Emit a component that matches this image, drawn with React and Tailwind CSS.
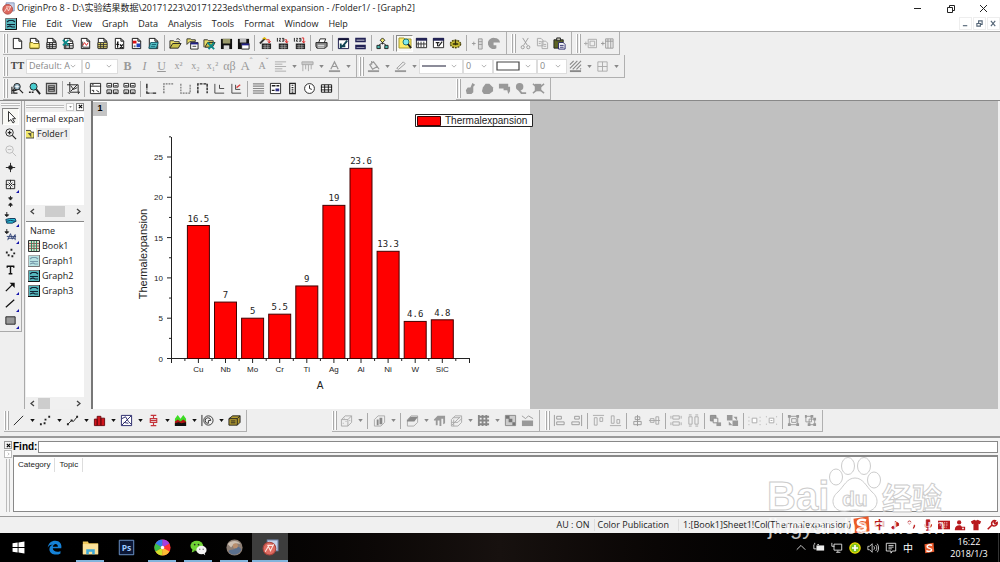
import React, { useState } from 'react';
import clsx from 'clsx';

// 14x14 toolbar drawings, keyed by name
const page = <path d="M2.500 1.500h6l3 3v8h-9zM8.500 1.500v3h3" fill="#fff" stroke="#111" />;
const floppy = <path d="M1 2h12v11H1z" fill="#111" />;

const glyphs = {
  newProject: page,
  newFolder: <>{page}<path d="M2 6h3l1 1h6v5H2z" fill="#ffef7a" stroke="#776a10" /></>,
  newBook: <>{page}<path d="M2 6h10v6H2zM2 8h10M2 10h10M5 6v6M8 6v6" fill="#fff" stroke="#222" /></>,
  newExcel: <>{page}<path d="M4 7h8v5H4zM4 9.500h8M8 7v5" fill="#fff" stroke="#222" /><path d="M1 3l6 6M7 3l-6 6" stroke="#0b8a8a" strokeWidth="2" /></>,
  newGraph: <>{page}<path d="M4 5v6h7" fill="none" stroke="#333" /><path d="M4 9l2-3 2 3 2-3" fill="none" stroke="#d22" /></>,
  newMatrix: <>{page}<path d="M2 6h10v6H2z" fill="#ffee70" stroke="#333" /><path d="M2 8h10M2 10h10M5 6v6M8 6v6" stroke="#333" /></>,
  newFunction: <>{page}<path d="M6 5.500h-1v6M3.500 8h3M7.500 8l3 4M10.500 8l-3 4" fill="none" stroke="#111" strokeWidth="1.300" /></>,
  newLayout: <>{page}<path d="M3 4h4v3H3z" fill="#d11" /><path d="M7 7h4v4H7z" fill="#2244bb" /><path d="M4 9h2v2H4z" fill="#777" /></>,
  newNotes: <>{page}<path d="M4 6h8l-2 6H2z" fill="#5ed0d4" stroke="#156" /><path d="M5 8h5M4 10h5" stroke="#156" /></>,
  open: <><path d="M1 12V4h4l1 1h5v2" fill="#e8dd66" stroke="#333" /><path d="M1 12l3-5h9l-3 5z" fill="#c9c14a" stroke="#222" /><path d="M8 2.500c2-1.500 3 0 4 1" fill="none" stroke="#222" /></>,
  openTemplate: <><path d="M1 8V2h4l1 1h4v2H4z" fill="#e8dd66" stroke="#333" /><path d="M5 6h8v7H5z" fill="#fff" stroke="#222" /><path d="M5 6h8v2H5z" fill="#228" /><path d="M7 10h4" stroke="#333" /></>,
  openExcel: <><path d="M1 11V3h4l1 1h5v2" fill="#e8dd66" stroke="#333" /><path d="M2 11l3-5h8l-3 5z" fill="#c9c14a" stroke="#222" /><path d="M5 6l7 7M12 6l-6 7" stroke="#0b8a8a" strokeWidth="2" /></>,
  save: <>{floppy}<path d="M3 2h8v5H3z" fill="#9a9a6a" /><path d="M4 9h6v4H4z" fill="#ddd" /></>,
  saveTemplate: <>{floppy}<path d="M3 2h7v4H3z" fill="#bbb" /><path d="M5 7h8v6H5z" fill="#fff" stroke="#222" /><path d="M5 7h8v2H5z" fill="#228" /></>,
  wizard: <><path d="M3 7h10v6H3z" fill="#222" /><path d="M4 9.500h8M4 11.500h8M6.500 8v5M9.500 8v5" stroke="#ccc" strokeWidth=".6" /><path d="M1 7l5-5" stroke="#333" strokeWidth="2" /><path d="M4 2l2-1 2 2" fill="none" stroke="#d9b400" strokeWidth="1.500" /><path d="M8 3h3v3M9.500 4.500l1.500 2 1.500-2" fill="none" stroke="#d22" /></>,
  importOne: <><path d="M3 7h10v6H3z" fill="#222" /><path d="M4 9.500h8M4 11.500h8M6.500 8v5M9.500 8v5" stroke="#ccc" strokeWidth=".6" /><path d="M1.500 1v4M3.500 1.500h1.500l-1.500 3h2M6.500 1.500h2v3h-2M7 3h1" fill="none" stroke="#222" /><path d="M9.500 3h2v3M10 4.500l1.500 2 1.500-2" fill="none" stroke="#d22" /></>,
  importMany: <><path d="M3 7h10v6H3z" fill="#222" /><path d="M4 9.500h8M4 11.500h8M6.500 8v5M9.500 8v5" stroke="#ccc" strokeWidth=".6" /><path d="M1.500 1v4M3.500 1.500h1.500l-1.500 3h2M6.500 1.500h2v3h-2M7 3h1" fill="none" stroke="#222" /><path d="M9.500 1h2v5M10 4.500l1.500 2 1.500-2" fill="none" stroke="#d22" /></>,
  print: <><path d="M4 6l1.500-4h6L10 6" fill="#fff" stroke="#222" /><path d="M1 6h12v4l-2 2H2l-1-2z" fill="#888" stroke="#222" /><path d="M3 9h7M3 11h7" stroke="#eee" /></>,
  refresh: <><path d="M1.500 1.500h11v11h-11z" fill="#fff" stroke="#114" /><path d="M1.500 1.500h11v2h-11z" fill="#113" /><path d="M11 4L6 10M4 7v4l3-2M3 10h6" fill="none" stroke="#145" strokeWidth="2" /></>,
  duplicate: <path d="M2 1.500h10v3.500H2zM2 9h10v3.500H2zM2 3h10M2 10.500h10" fill="#fff" stroke="#225" strokeWidth="1.400" />,
  explorer: <><path d="M7 5v3M7 6l-4 3M7 6l4 3M5 12H2M12 12H9" stroke="#222" fill="none" /><path d="M7 1l2.500 2.500L7 6 4.500 3.500z" fill="#efe76a" stroke="#222" /><path d="M1 9h3.500v3.500H1zM9.500 9H13v3.500H9.500z" fill="#49b9b0" stroke="#222" /></>,
  projectView: <><path d="M1 2h5l1 1h6v9H1z" fill="#ffec67" stroke="#a59b30" /><circle cx="8" cy="6" r="3" fill="#7fe9ee" stroke="#277" /><path d="M10 8l3 4" stroke="#222" strokeWidth="2" /></>,
  resultsLog: <><path d="M1.500 1.500h11v10h-11z" fill="#fff" stroke="#222" /><path d="M1 1h12v3H1z" fill="#225" /><path d="M3.500 5v6M6.500 5v6M9.500 5v6M2 7.500h10" stroke="#333" /></>,
  script: <><path d="M1.500 1.500h11v10h-11z" fill="#fff" stroke="#222" /><path d="M1 1h12v3H1z" fill="#225" /><path d="M4 6h4M6 6v4M7 10l4-5" stroke="#222" strokeWidth="1.300" /></>,
  gear: <><ellipse cx="7" cy="7.500" rx="5.500" ry="4" fill="#c9bd36" stroke="#4d470b" strokeWidth="1.500" strokeDasharray="2 1" /><path d="M4 7.500h6M7 3v6" stroke="#332f08" strokeWidth="1.500" /></>,
  addColumn: <path d="M1 7h4M3 5v4M8 2h4v11H8zM8 5h4M8 8h4" fill="#ddd" stroke="#999" />,
  rotateShape: <path d="M7 1a6 6 0 1 0 2 11V9H6V6h7A6 6 0 0 0 7 1z" fill="#999" />,
  cut: <><path d="M4 1l5 8M10 1L5 9" stroke="#999" fill="none" /><circle cx="4" cy="11" r="1.700" fill="none" stroke="#999" /><circle cx="10" cy="11" r="1.700" fill="none" stroke="#999" /></>,
  copy: <path d="M1.500 1.500h4l2 2v6h-6zM6.500 4.500h4l2 2v6h-6zM3 5h3M3 7h2M8 8h3M8 10h3" fill="#eee" stroke="#aaa" />,
  paste: <><path d="M1 3h10v9H1z" fill="#5c6323" stroke="#222" /><path d="M4 1h4v3H4z" fill="#bba" stroke="#222" /><path d="M6 6h5l2 2v5H6z" fill="#fff" stroke="#226" /><path d="M7.500 9h4M7.500 11h4" stroke="#226" /></>,
  layerBox: <path d="M0 7h4M2 5v4M4.500 2.500h9v9h-9zM6.500 4.500h5v5h-5z" fill="none" stroke="#aaa" />,
  layerCols: <path d="M0 7h4M2 5v4M5 2h8v10H5zM7.500 2v10M10.500 2v10M5 4.500h8" fill="none" stroke="#999" />,
  zoomIn: <><circle cx="6.500" cy="5" r="3.500" fill="#8ab" stroke="#222" /><path d="M4.500 5h4M6.500 3v4" stroke="#fff" /><path d="M9 8l4 4M1 5v8M3 7v5h4M1 9h5" stroke="#222" fill="none" strokeWidth="1.300" /></>,
  zoomTeal: <><circle cx="6" cy="5" r="3.800" fill="#48cdd0" stroke="#222" /><path d="M9 8l4 5" stroke="#222" strokeWidth="2" /><path d="M1 11h6" stroke="#222" strokeWidth="1.500" strokeDasharray="2 1" /></>,
  wholePage: <path d="M1.500 1.500h11v11h-11zM4 4h6v6H4zM4 6h6M4 8h6" fill="#bbb" stroke="#444" strokeWidth="1.200" />,
  rescale: <path d="M3 0v11h11M0 3h12v8M4 10l7-7M4 4l3 4 4-2M1 11l2 2M12 13l1-2" fill="none" stroke="#222" />,
  panelOne: <path d="M1.500 1.500h11v11h-11zM1 4.500h12M3 9h2v2M8 9l3 2M3 3h2" fill="#fff" stroke="#222" />,
  panelFour: <path d="M1 1.500h5v4H1zM8 1.500h5v4H8zM1 8.500h5v4H1zM8 8.500h5v4H8zM2 4h3M9 4h3M2 11h3M9 11h3" fill="#fff" stroke="#222" />,
  axisBL: <path d="M2 2v10h10" fill="none" stroke="#222" strokeWidth="1.500" strokeDasharray="5 1 1 1" />,
  axisTop: <path d="M2 12V2h11" fill="none" stroke="#777" strokeWidth="1.500" strokeDasharray="2 1" />,
  axisBR: <path d="M2 2v10h10V2" fill="none" stroke="#777" strokeWidth="1.300" strokeDasharray="2 1" />,
  axisBox: <path d="M2 12V2h10v10" fill="none" stroke="#222" strokeWidth="1.500" strokeDasharray="3 1" />,
  axisInset: <path d="M2 2v10h10M7 3v4h5" fill="none" stroke="#444" />,
  axisInsetRed: <><path d="M2 2v10h10M6 3v5h5" fill="none" stroke="#444" /><path d="M7 6l4-3" stroke="#d44" strokeWidth="1.500" /></>,
  lines: <path d="M1 2h12M1 4.500h12M1 7h12M1 9.500h12M1 12h12" stroke="#888" strokeWidth="1.300" />,
  legendBox: <><path d="M1.500 1.500h11v11h-11z" fill="#fff" stroke="#222" /><path d="M3 4h4M8 4h3M3 9h3" stroke="#222" strokeWidth="1.500" /><path d="M7 7h4v3H7z" fill="#338" /></>,
  colorScale: <path d="M4 1.500h6v11H4zM6 3.500h2M6 6h2M6 8.500h2M6 11h2" fill="#fff" stroke="#222" strokeWidth="1.300" />,
  clock: <><circle cx="7" cy="7" r="5.300" fill="#fff" stroke="#222" /><path d="M7 3.500V7l2.500 1" stroke="#222" fill="none" /></>,
  table: <path d="M1.500 3h11v8h-11zM1 5.500h12M1 8.500h12M5 3v8M9 3v8" fill="#fff" stroke="#111" />,
  maskA: <path d="M9 1l3 2-2 2v6l-2 2H3l-1-4 2-3h3z" fill="#999" />,
  maskB: <path d="M2 6l3-4h4l4 4v4l-4 3H3l-2-3z" fill="#999" />,
  maskC: <path d="M1 2h10v3h2v5l-2 3-1-4H6V7H1z" fill="#999" />,
  maskD: <><circle cx="5" cy="5" r="4" fill="#999" /><path d="M4 8l3 4h5" stroke="#999" strokeWidth="2" fill="none" /></>,
  maskE: <><path d="M3 2h7v8H3z" fill="#999" /><path d="M1 2l12 10M13 2L1 12" stroke="#999" strokeWidth="1.500" /></>,
  alignText: <path d="M1 2h12M1 4.500h8M1 7h12M1 9.500h8M1 12h12" stroke="#aaa" />,
  column: <path d="M1 2h12v3H1zM2 5v7M5 5v5M8 5v7M11 5v5" fill="#ccc" stroke="#aaa" />,
  bucket: <><path d="M3 5l4-3 4 5-5 3zM5 5V1M11 7l2 3" fill="none" stroke="#999" strokeWidth="1.300" /><path d="M1 11h12v2H1z" fill="#999" /></>,
  pen: <><path d="M3 9l7-7 2 2-7 6z" fill="none" stroke="#999" /><path d="M1 11h12v2H1z" fill="#999" /></>,
  fontColor: <><path d="M3 10l4-8 4 8M4.500 7h5" fill="none" stroke="#999" strokeWidth="1.300" /><path d="M1 11h12v2H1z" fill="#999" /></>,
  hatch: <><path d="M1 5l4-4M1 9l8-8M4 10l9-9M8 10l5-5M12 10l1-1" stroke="#888" strokeWidth="1.200" /><path d="M1 11h12v2H1z" fill="#888" /></>,
  grid: <path d="M2 2h10v10H2zM7 2v10M2 7h10" fill="none" stroke="#aaa" />,
  pointer: <path d="M4.500 1.500v10l2.500-2 2 3.500 1.500-1-2-3.300h3z" fill="#fff" stroke="#333" />,
  magnify: <><circle cx="6" cy="6" r="4" fill="none" stroke="#222" /><path d="M4 6h4M6 4v4M9 9l4 4" stroke="#222" strokeWidth="1.300" /></>,
  magnifyOff: <><circle cx="6" cy="6" r="4" fill="none" stroke="#bbb" /><path d="M4 6h4M9 9l4 4" stroke="#bbb" /></>,
  screenReader: <><path d="M7 2v10M2 7h10" stroke="#222" /><circle cx="7" cy="7" r="2.500" fill="#222" /></>,
  dataReader: <><path d="M2.500 2.500h9v9h-9zM7 2v3M7 9v3M2 7h3M9 7h3" fill="none" stroke="#222" /><path d="M5 5l4 4M9 5L5 9" stroke="#222" /></>,
  dataSelect: <path d="M7 1v4M7 9v4M5 3l2 2.500L9 3zM5 11l2-2.500L9 11z" fill="#222" stroke="#222" />,
  maskPts: <><path d="M2 8l4-1h6l1 3-4 2H3z" fill="#27bcd6" stroke="#135" /><path d="M3 10l4-1 5 1" fill="none" stroke="#135" /><path d="M3 0v4M1 3l2 2 2-2z" fill="#222" stroke="#222" /></>,
  draw: <><path d="M4 12l3-7 2 6 3-5v6M3 8h10M4 10h8" fill="none" stroke="#347" /><path d="M3 0v4M1 3l2 2 2-2z" fill="#222" stroke="#222" /></>,
  scatterTool: <path d="M2 6h2v2H2zM7 3h2v2H7zM10 7h2v2h-2zM4 9h2v2H4zM8 10h2v2H8z" fill="#222" />,
  textTool: <path d="M3 3.500h8M7 3v8M5 11.500h4M3.500 3v2M10.500 3v2" stroke="#111" strokeWidth="1.500" fill="none" />,
  arrowTool: <><path d="M2 12l7-7" stroke="#111" strokeWidth="1.400" /><path d="M6 3h5.500v5.500z" fill="#111" /></>,
  lineTool: <path d="M2 11l9-8" stroke="#111" strokeWidth="1.300" />,
  rectTool: <path d="M2 3h10v8H2z" fill="#999" stroke="#222" />,
  plotLine: <path d="M2 12L12 2" stroke="#222" />,
  plotScatter: <path d="M1 10h2v2H1zM5 9h2v2H5zM6 5h2v2H6zM10 2h2v2h-2z" fill="#222" />,
  plotLineSym: <><path d="M2 11l4-4 2 1 4-5" fill="none" stroke="#222" /><path d="M1 10h2v2H1zM5 6h2v2H5zM11 2h2v2h-2z" fill="#222" /></>,
  plotBar: <path d="M1.500 5.500h3v7h-3zM4.500 2.500h4v10h-4zM8.500 4.500h4v8h-4z" fill="#d1141c" stroke="#6b0a0e" />,
  plotBox: <><path d="M1.500 1.500h11v11h-11z" fill="#fff" stroke="#226" /><path d="M2 12l10-10M2 5l4-2 3 5 3 3M4 9l5 1" fill="none" stroke="#226" /></>,
  plotStock: <path d="M4 1.500h6M7 2v3M3.500 5h7v4h-7zM3.500 7h7M7 9v3M4 12.500h6" fill="none" stroke="#c4333a" strokeWidth="1.200" />,
  plotArea: <><path d="M1 13V5l3-4 3 4 3-4 3 4v8z" fill="#3cdc24" /><path d="M1 13V8l3-2 3 2 3-2 3 2v5z" fill="#b41212" /><path d="M1 13v-3l4-1 3 1 5-1v4z" fill="#111" /></>,
  plotPolar: <><path d="M1 1v12" stroke="#222" /><circle cx="8" cy="7" r="5" fill="none" stroke="#333" /><path d="M8 10a3 3 0 1 1 2.500-3H8v3" fill="none" stroke="#333" /></>,
  plotTemplate: <><path d="M1 5l4-3h8v7l-3 3H1z" fill="#b49b2f" stroke="#222" /><path d="M1 5h9v7M10 5l3-3M3 7.500h5M3 9.500h5" fill="none" stroke="#222" /></>,
  cube: <path d="M1.500 6v7h7l4-4V2h-7l-4 4h7l4-4M8.500 6v7M4 4.500h1M6 8h1M3 10h1M10 7h1" fill="#eee" stroke="#aaa" />,
  cubeBars: <><path d="M1.500 6v7h7l4-4V2h-7z" fill="#eee" stroke="#aaa" /><path d="M4 6h2v6H4zM7 4h3v7H7z" fill="#888" /></>,
  surface: <><path d="M1.500 6v7h7l4-4V2h-7z" fill="#eee" stroke="#aaa" /><path d="M1 7l4-4h8l-4 5H1z" fill="#888" /></>,
  walls: <path d="M1 6l4-4h8v8l-2 1V5H9v8H7V7H5v5H3V7H1z" fill="#999" />,
  cubeMesh: <path d="M1.500 6v7h7l4-4V2h-7zM1.500 9h7l4-4M4 6v7M3 4h8M2 12l9-9" fill="none" stroke="#aaa" />,
  contour: <path d="M2 1v12M6 1v12M10 1v12M1 3h12M1 7h12M1 11h12" stroke="#888" strokeWidth="2" fill="none" />,
  image: <><path d="M1.500 1.500h11v11h-11z" fill="#ccc" stroke="#888" /><path d="M2 2h4v3H2zM5 5h4v4H5zM9 9h3v3H9z" fill="#777" /></>,
  profile: <><path d="M1 2l4 3 3-3 5 3" fill="none" stroke="#999" /><path d="M1 7h12v6H1z" fill="#999" /></>,
  alLeft: <path d="M1.500 1v12M4 2.500h5v3H4zM4 8.500h8v3H4z" fill="none" stroke="#999" />,
  alRight: <path d="M12.500 1v12M5 2.500h5v3H5zM2 8.500h8v3H2z" fill="none" stroke="#999" />,
  alTop: <path d="M1 1.500h12M2.500 4h3v8h-3zM8.500 4h3v4h-3z" fill="none" stroke="#aaa" />,
  alBottom: <path d="M1 12.500h12M2.500 2h3v8h-3zM8.500 6h3v4h-3z" fill="none" stroke="#aaa" />,
  alMidV: <path d="M7 1v12M4.500 3h5v3h-5zM3 8h8v3.500H3z" fill="#eee" stroke="#999" />,
  alMidH: <path d="M1 7h12M2.500 5h4v4h-4zM8.500 3h3v8h-3z" fill="#eee" stroke="#aaa" />,
  sameW: <path d="M3 2h7v3.500H3zM3 8.500h7V12H3zM1 2v3M12 2v3M1 9v3M12 9v3" fill="none" stroke="#aaa" />,
  sameH: <path d="M2 3h3.500v8H2zM8.500 3H12v8H8.500zM2 1h3M9 1h3M2 13h3M9 13h3" fill="none" stroke="#aaa" />,
  front: <><path d="M1.500 1.500h6v6h-6z" fill="#999" stroke="#888" /><path d="M4.500 4.500h5v5h-5z" fill="#eee" stroke="#888" /><path d="M8 9h5v4H8z" fill="#999" /></>,
  back: <path d="M1 1h6v6H1zM7 7h6v6H7zM8 3h4v4M3 8v4h4" fill="#999" />,
  groupA: <path d="M4.500 4.500h5v5h-5zM1 3v1M1 7v1M1 11v1M13 3v1M13 7v1M13 11v1" fill="#fff" stroke="#aaa" />,
  groupB: <path d="M4.500 4.500h5v5h-5zM6 7h2M1 3h1M1 11h1M12 3h1M12 11h1" fill="#fff" stroke="#aaa" />,
  group: <><path d="M2.500 2.500h9v9h-9zM5 5h5v4H5z" fill="none" stroke="#999" /><path d="M1 1h3v3H1zM10 1h3v3h-3zM1 10h3v3H1zM10 10h3v3h-3z" fill="#999" /></>,
  ungroup: <><path d="M2 2.500h6v6H2zM5.500 5.500h6v6h-6z" fill="none" stroke="#999" /><path d="M1 1h2v3H1zM7 1h3v3H7zM10 4h3v3h-3zM4 10h3v3H4zM10 10h3v3h-3z" fill="#999" /></>,
};

const Glyph = ({ name, className = 'size-3' }) => (
  <svg viewBox="0 0 14 14" className={clsx('shrink-0', className)} fill="none" aria-hidden="true">
    {glyphs[name]}
  </svg>
);

const ToolButton = ({ name, label, active, children }) => (
  <button
    type="button"
    aria-label={label || name}
    className={clsx(
      'flex h-[17px] w-[17px] shrink-0 items-center justify-center text-[#999]',
      active && 'border border-t-[#888] border-l-[#888] border-r-white border-b-white bg-[#f8f8f4]'
    )}
  >
    {children || <Glyph name={name} className={active ? 'size-[14px]' : 'size-[13px]'} />}
  </button>
);

const Sep = ({ wide }) => (
  <span className={clsx('h-4 w-px shrink-0 border-l border-[#aaa]', wide ? 'mr-[3px] ml-[2px]' : 'mx-[2px]')} />
);

const Grip = () => (
  <span className="mr-px flex h-[19px] shrink-0 gap-px">
    <span className="w-[2px] border-r border-[#aaa] bg-white" />
    <span className="w-[2px] border-r border-[#aaa] bg-white" />
  </span>
);

const DropArrow = ({ dark }) => (
  <button type="button" aria-label="More" className="flex h-[17px] w-[10px] shrink-0 items-center justify-center">
    <svg viewBox="0 0 6 4" className="h-[3px] w-[5px]"><path d="M0 0h6L3 4z" fill={dark ? '#111' : '#888'} /></svg>
  </button>
);

// "-" is a separator, ">" a drop arrow, a leading "*" marks a pressed button
const Tools = ({ items, dark, wide }) =>
  items.map((item, i) => {
    if (item === '-') return <Sep key={i} wide={wide} />;
    if (item === '>') return <DropArrow key={i} dark={dark} />;
    if (item[0] === '*') return <ToolButton key={i} name={item.slice(1)} active />;
    return <ToolButton key={i} name={item} />;
  });

const Toolbar = ({ children, className }) => (
  <div className={clsx('flex h-full shrink-0 items-center border-r border-b border-[#b0b0b0] pr-[3px]', className)}>
    <Grip />
    {children}
  </div>
);

const Chevron = () => (
  <svg viewBox="0 0 8 5" className="pointer-events-none absolute right-[5px] h-1 w-[6px]">
    <path d="M1 1l3 3 3-3" fill="none" stroke="#999" />
  </svg>
);

const Combo = ({ label, value, className, children }) => (
  <label className={clsx('relative flex h-[15px] shrink-0 items-center border border-[#ddd] bg-white', className)}>
    <select aria-label={label} className="h-full w-full appearance-none overflow-hidden bg-transparent pl-[2px] text-[9px] leading-3 text-[#888]">
      <option>{value}</option>
    </select>
    {children}
    <Chevron />
  </label>
);

const menus = ['File', 'Edit', 'View', 'Graph', 'Data', 'Analysis', 'Tools', 'Format', 'Window', 'Help'];

const OriginLogo = ({ className }) => (
  <svg viewBox="0 0 16 16" className={className} aria-hidden="true">
    <path d="M5 1h10v10H5z" fill="#c6d3ea" stroke="#7d8fb5" />
    <circle cx="7" cy="9" r="6" fill="#dd6a60" stroke="#a8433c" />
    <path d="M3 12l3-5 2 4 3-6M5 6h6" fill="none" stroke="#ffe5df" />
  </svg>
);

const GraphIcon = ({ pale }) => (
  <svg viewBox="0 0 12 12" className="size-3 shrink-0" aria-hidden="true">
    <path d="M.5.5h11v11H.5z" fill={pale ? '#b7e2e2' : '#56b6bc'} stroke={pale ? '#aaa' : '#777'} />
    <path d="M11.500 0v11.500H0" fill="none" stroke={pale ? '#777' : '#111'} />
    <path d="M2 4l2-1.500h4L10 4M2 6.500h8M2 9l3-1 2 1h3" fill="none" stroke={pale ? '#79a' : '#123'} strokeWidth="1.200" />
  </svg>
);

const BookIcon = () => (
  <svg viewBox="0 0 12 12" className="size-3 shrink-0" aria-hidden="true">
    <path d="M.5.5h11v11H.5z" fill="#d5e2cd" stroke="#333" />
    <path d="M1 3.500h10M1 6h10M1 8.500h10" stroke="#a55" />
    <path d="M3.500 1v10M6 1v10M8.500 1v10" stroke="#386" />
  </svg>
);

const TopBars = () => (
  <header className="bg-white text-[9px] text-[#222]">
    <div className="flex h-4 items-center">
      <OriginLogo className="mx-[2px] size-[13px]" />
      <h1 className="text-[9px] leading-3">
        OriginPro 8 - D:\实验结果数据\20171223\20171223eds\thermal expansion - /Folder1/ - [Graph2]
      </h1>
      <div className="ml-auto flex">
        {['M1 4.500h7', 'M1.500 3.500h5v5h-5zM3.500 3V1.500h5v5H7', 'M1 1l7 7M8 1L1 8'].map((d, i) => (
          <button key={d} type="button" aria-label={['Minimize', 'Restore', 'Close'][i]} className="flex h-4 w-[33px] items-center justify-center">
            <svg viewBox="0 0 9 9" className="size-[9px]"><path d={d} fill="none" stroke="#222" /></svg>
          </button>
        ))}
      </div>
    </div>
    <nav className="flex h-[15px] items-center">
      <span className="mr-[5px] ml-[5px]"><GraphIcon /></span>
      <div className="flex gap-[10px]">
        {menus.map((m) => (
          <button key={m} type="button" className="leading-3">{m}</button>
        ))}
      </div>
      <div className="ml-auto flex gap-px">
        {['M1 6.500h5', 'M1 4h4v3H1zM3 3.500V1h4v4H5', 'M1 1l5 6M6 1L1 7'].map((d, i) => (
          <button key={d} type="button" aria-label={['Minimize graph', 'Restore graph', 'Close graph'][i]} className="flex h-[13px] w-[13px] items-center justify-center border border-[#eee]">
            <svg viewBox="0 0 8 8" className="size-[7px]"><path d={d} fill="none" stroke="#567" strokeWidth="1.300" /></svg>
          </button>
        ))}
      </div>
    </nav>
  </header>
);

const FormatToolbar = () => (
  <Toolbar>
    <ToolButton label="Font"><span className="font-[Liberation_Serif,serif] text-[10px] leading-3 font-bold text-[#444]">TT</span></ToolButton>
    <Combo label="Font name" value="Default: A" className="w-[56px]" />
    <Combo label="Font size" value="0" className="mr-px w-[36px]" />
    <div className="flex font-[Liberation_Serif,serif] text-[12px] leading-3">
      <ToolButton label="Bold"><b>B</b></ToolButton>
      <ToolButton label="Italic"><i>I</i></ToolButton>
      <ToolButton label="Underline"><u>U</u></ToolButton>
      <ToolButton label="Superscript"><span className="text-[10px]">x²</span></ToolButton>
      <ToolButton label="Subscript"><span className="text-[10px]">x₂</span></ToolButton>
      <ToolButton label="Super and subscript"><span className="text-[10px]">x₁²</span></ToolButton>
      <ToolButton label="Greek">αβ</ToolButton>
      <ToolButton label="Increase font"><span className="text-[13px]">A</span><span className="self-start text-[8px] leading-[8px]">ˆ</span></ToolButton>
      <ToolButton label="Decrease font"><span className="text-[10px]">A</span><span className="self-start text-[8px] leading-[8px]">ˇ</span></ToolButton>
    </div>
    <Tools items={['alignText', '>', 'column', '>', 'fontColor', '>']} />
  </Toolbar>
);

const TopToolbars = () => (
  <div className="shrink-0 border-t border-[#aaa] bg-[#efefef]">
    <div className="flex h-[23px] pl-[3px]">
      <Toolbar>
        <Tools items={['newProject', 'newFolder', 'newBook', 'newExcel', 'newGraph', 'newMatrix', 'newFunction', 'newLayout', 'newNotes', '-',
          'open', 'openTemplate', 'openExcel', 'save', 'saveTemplate', '-', 'wizard', 'importOne', 'importMany', '-', 'print', '-',
          'refresh', 'duplicate', '-', 'explorer', '-', '*projectView', 'resultsLog', 'script', 'gear', '-', 'addColumn', 'rotateShape']} />
      </Toolbar>
      <Toolbar className="pl-[4px]"><Tools items={['cut', 'copy', 'paste']} /></Toolbar>
      <Toolbar className="pl-[4px]"><Tools items={['layerBox', 'layerCols']} /></Toolbar>
    </div>
    <div className="flex h-[23px] pl-[3px]">
      <FormatToolbar />
      <Toolbar className="pl-[2px]">
        <Tools items={['bucket', '>', 'pen', '>']} />
        <Combo label="Line style" value="" className="w-[44px]">
          <svg viewBox="0 0 24 8" className="pointer-events-none absolute left-[2px] h-2 w-6"><path d="M0 4h24" stroke="#667" strokeWidth="1.500" /></svg>
        </Combo>
        <Combo label="Line width" value="0" className="w-[30px]" />
        <Combo label="Border style" value="" className="w-[44px]">
          <svg viewBox="0 0 24 10" className="pointer-events-none absolute left-[2px] h-[10px] w-6"><path d="M1 1h22v8H1z" fill="none" stroke="#444" strokeWidth="1.200" /></svg>
        </Combo>
        <Combo label="Border width" value="0" className="w-[30px]" />
        <Tools items={['hatch', '>', 'grid', '>']} />
      </Toolbar>
    </div>
    <div className="flex h-[22px] pl-[3px]">
      <Toolbar>
        <Tools items={['zoomIn', 'zoomTeal', 'wholePage', '-', 'rescale', '-', 'panelOne', 'panelFour', 'panelFour', '-',
          'axisBL', 'axisTop', 'axisBR', 'axisBox', 'axisInset', 'axisInsetRed', '-', 'lines', 'legendBox', 'colorScale', 'clock', 'table']} />
      </Toolbar>
      <Toolbar className="ml-[117px]"><Tools items={['maskA', 'maskB', 'maskC', 'maskD', 'maskE']} /></Toolbar>
    </div>
  </div>
);

const sideTools = ['*pointer', 'magnify', 'magnifyOff', 'screenReader', 'dataReader', 'dataSelect', 'maskPts', 'draw', 'scatterTool', 'textTool', 'arrowTool', 'lineTool', 'rectTool'];
const withFlyout = ['dataReader', 'maskPts', 'draw', 'arrowTool', 'lineTool', 'rectTool'];

const SideTools = () => (
  <div className="w-[22px] shrink-0 self-start border-r border-b border-[#aaa] pb-[2px]">
    <div className="mx-px mt-[2px] h-[3px] border-y border-[#bbb] bg-white" />
    <div className="mt-[2px] flex flex-col items-center">
      {sideTools.map((t) => (
        <div key={t} className="relative">
          {t[0] === '*' ? <ToolButton name={t.slice(1)} active /> : <ToolButton name={t} />}
          {withFlyout.includes(t) && (
            <svg viewBox="0 0 3 3" className="absolute right-0 bottom-0 size-[3px]"><path d="M3 0v3H0z" fill="#11a" /></svg>
          )}
        </div>
      ))}
    </div>
  </div>
);

const HScroll = ({ children }) => (
  <div className="flex h-3 shrink-0 items-center bg-[#f0f0f0] text-[#444]">
    <button type="button" aria-label="Scroll left" className="flex w-3 justify-center">
      <svg viewBox="0 0 5 7" className="h-[7px] w-[5px]"><path d="M4 1L1 3.500 4 6" fill="none" stroke="currentColor" strokeWidth="1.300" /></svg>
    </button>
    <div className="flex h-[11px] flex-1">{children}</div>
    <button type="button" aria-label="Scroll right" className="flex w-3 justify-center">
      <svg viewBox="0 0 5 7" className="h-[7px] w-[5px]"><path d="M1 1l3 2.500L1 6" fill="none" stroke="currentColor" strokeWidth="1.300" /></svg>
    </button>
  </div>
);

const ProjectExplorer = () => (
  <aside className="ml-[2px] flex w-[69px] shrink-0 flex-col border-r-2 border-l border-l-[#aaa] border-r-[#777] pr-[7px] pl-px text-[9px] text-[#222]">
    <div className="flex h-[11px] shrink-0 items-center gap-[2px]">
      <span className="h-[3px] flex-1 border-y border-[#bbb] bg-white" />
      <button type="button" aria-label="Menu" className="flex size-2 items-center justify-center border border-[#ccc] bg-white">
        <svg viewBox="0 0 4 3" className="h-[2px] w-[3px]"><path d="M0 0h4L2 3z" fill="#888" /></svg>
      </button>
      <button type="button" aria-label="Close panel" className="flex size-2 items-center justify-center border border-[#888] bg-white">
        <svg viewBox="0 0 6 6" className="size-[5px]"><path d="M1 1l4 4M5 1L1 5" stroke="#000" strokeWidth="1.400" /></svg>
      </button>
    </div>
    <div className="flex h-[93px] shrink-0 flex-col overflow-hidden bg-white whitespace-nowrap">
      <div className="h-[14px] leading-[14px]">hermal expan</div>
      <div className="flex h-[15px] items-center">
        <svg viewBox="0 0 9 10" className="h-[10px] w-2 shrink-0"><path d="M0 1h5l1 2h3v6.500H0" fill="#f2e76b" stroke="#333" /><path d="M2 4l4 5V4z" fill="#554" /></svg>
        <span className="ml-[2px] bg-[#eee] px-px leading-3">Folder1</span>
      </div>
    </div>
    <HScroll><span className="ml-[7px] w-5 bg-[#cdcdcd]" /></HScroll>
    <div className="mt-1 flex min-h-0 flex-1 flex-col border-t border-[#888] bg-white">
      <div className="mt-[2px] pl-1 leading-[14px]">Name</div>
      <ul className="mt-[2px] flex-1 pl-[2px]">
        {['Book1', 'Graph1', 'Graph2', 'Graph3'].map((n) => (
          <li key={n} className="mb-[3px] flex h-3 items-center gap-[2px] leading-3">
            {n === 'Book1' ? <BookIcon /> : <GraphIcon pale={n === 'Graph1'} />}
            {n}
          </li>
        ))}
      </ul>
    </div>
    <HScroll><span className="w-3 bg-[#cdcdcd]" /></HScroll>
  </aside>
);

const data = [
  ['Cu', 16.5], ['Nb', 7], ['Mo', 5], ['Cr', 5.5], ['Ti', 9],
  ['Ag', 19], ['Al', 23.6], ['Ni', 13.3], ['W', 4.6], ['SiC', 4.8],
];
const BASE = 257.5;
const yOf = (v) => BASE - v * 8.06;
const xOf = (i) => 105.4 + i * 27.1;

const BarChart = () => (
  <svg viewBox="0 0 437 306" className="h-[306px] w-[437px] overflow-visible font-[Liberation_Sans,Arial,sans-serif]" role="img" aria-label="Thermalexpansion">
    <g stroke="#222">
      <path d="M78.500 36v226M74 257.500h303M376.500 257v5" />
      {[5, 10, 15, 20, 25].map((v) => <path key={v} d={`M74 ${yOf(v)}h4`} />)}
      {[2.5, 7.5, 12.5, 17.5, 22.5, 27.5].map((v) => <path key={v} d={`M76 ${yOf(v)}h2`} />)}
      {data.map(([name], i) => <path key={name} d={`M${xOf(i)} 258v4M${xOf(i) - 13.5} 258v2`} />)}
      <path d={`M${xOf(9) + 13.5} 258v2`} />
      {data.map(([name, v], i) => (
        <rect key={name} x={xOf(i) - 11} y={yOf(v)} width="22" height={v * 8.06} fill="#f00" stroke="#400" />
      ))}
    </g>
    <g textAnchor="middle" fill="#222">
      {data.map(([name, v], i) => (
        <React.Fragment key={name}>
          <text x={xOf(i)} y={yOf(v) - 4} fontSize="9" fontFamily="DejaVu Sans Mono, monospace">{v}</text>
          <text x={xOf(i)} y="271" fontSize="8">{name}</text>
        </React.Fragment>
      ))}
      <text x="227" y="288" fontSize="10">A</text>
      <text transform="translate(54 153) rotate(-90)" fontSize="11">Thermalexpansion</text>
    </g>
    <g textAnchor="end" fontSize="8" fill="#222">
      {[0, 5, 10, 15, 20, 25].map((v) => <text key={v} x="70" y={yOf(v) + 3}>{v}</text>)}
    </g>
    <path d="M322.500 13.500h117v12h-117z" fill="#fff" stroke="#222" />
    <path d="M324.500 15.500h23v9h-23z" fill="#f00" stroke="#400" />
    <text x="352" y="23" fontSize="10" fill="#222">Thermalexpansion</text>
  </svg>
);

const BottomToolbars = () => (
  <div className="flex h-[27px] shrink-0 bg-[#efefef] pt-px pb-1 pl-1">
    <Toolbar>
      <Tools dark items={['plotLine', '>', 'plotScatter', '>', 'plotLineSym', '>', 'plotBar', '>', 'plotBox', '>', 'plotStock', '>', 'plotArea', '>', 'plotPolar', '>', 'plotTemplate']} />
    </Toolbar>
    <Toolbar className="ml-[85px]">
      <Tools wide items={['cube', '>', '-', 'cubeBars', '>', '-', 'surface', '>', 'walls', 'cubeMesh', '>', 'contour', '>', 'image', 'profile']} />
    </Toolbar>
    <Toolbar className="pl-[5px]">
      <Tools items={['alLeft', 'alRight', '-', 'alTop', 'alBottom', '-', 'alMidV', 'alMidH', '-', 'sameW', 'sameH', '-', 'front', 'back', '-', 'groupA', 'groupB', '-', 'group', 'ungroup']} />
    </Toolbar>
  </div>
);

const FindPanel = () => {
  const [query, setQuery] = useState('');
  return (
    <section className="flex h-[80px] shrink-0 border-t-2 border-[#999] bg-[#f4f4f4] pt-[3px] pr-[2px] pb-1 pl-1">
      <div className="mr-px flex w-2 flex-col items-center">
        <button type="button" aria-label="Close find" className="flex size-2 items-center justify-center border border-[#999]">
          <svg viewBox="0 0 6 6" className="size-[5px]"><path d="M1 1l4 4M5 1L1 5" stroke="#000" strokeWidth="1.400" /></svg>
        </button>
        <button type="button" aria-label="Expand" className="mt-px flex size-2 items-center justify-center border border-[#bbb] bg-white">
          <svg viewBox="0 0 4 6" className="h-1 w-[3px]"><path d="M1 1l2 2-2 2" fill="none" stroke="#999" /></svg>
        </button>
        <span className="mt-px w-1 flex-1 border-x border-[#bbb]" />
      </div>
      <div className="flex flex-1 flex-col font-[Liberation_Sans,Arial,sans-serif]">
        <div className="flex h-3 items-center">
          <label htmlFor="find" className="text-[10px] leading-3 font-bold text-black">Find:</label>
          <input id="find" value={query} onChange={(e) => setQuery(e.target.value)} className="ml-px h-3 flex-1 border border-[#888] bg-white px-1 text-[9px]" />
        </div>
        <div className="mt-[2px] flex-1 border border-t-2 border-[#888] bg-white">
          <table className="mt-px text-[8px] text-[#222]">
            <thead>
              <tr>
                <th className="border-r border-[#ddd] px-1 text-left leading-[14px] font-normal">Category</th>
                <th className="border-r border-[#ddd] px-1 text-left leading-[14px] font-normal">Topic</th>
              </tr>
            </thead>
          </table>
        </div>
      </div>
    </section>
  );
};

const SogouLogo = ({ className }) => (
  <svg viewBox="0 0 16 16" className={className} aria-hidden="true">
    <path d="M2 3l12-2 1 12-12 2z" fill="#ea5a2b" />
    <path d="M12 4.500C9 3 5 4 5.500 6.500S12 8 11.500 10.500 7 13 4.500 11.500" fill="none" stroke="#fff" strokeWidth="2" />
  </svg>
);

const imeIcons = [
  ['Tone', <path d="M6 10V3l4 2v3M6 10a2 1.500 0 1 1-2-1.500z" stroke="#b8191d" fill="#b8191d" />],
  ['Punctuation', <><circle cx="4" cy="4" r="1.700" fill="none" stroke="#b8191d" /><path d="M9 7l1 1-1.500 3" stroke="#b8191d" strokeWidth="1.500" fill="none" /></>],
  ['Voice', <><path d="M5 1h4v7H5z" fill="#b8191d" stroke="#b8191d" /><path d="M3 6c0 5 8 5 8 0M7 10v3M4.500 13h5" fill="none" stroke="#b8191d" strokeWidth="1.500" /></>],
  ['Keyboard', <><path d="M0 2h14v10H0z" fill="#b8191d" /><path d="M2 4.500h10M2 7h10M4 9.500h6" stroke="#fff" strokeDasharray="1.500 1" /></>],
  ['User', <><circle cx="6" cy="4" r="2.500" fill="#b8191d" /><path d="M1 12c0-5 7-6 8-3h4v4H1z" fill="#b8191d" /><circle cx="10.500" cy="11" r="1" fill="#fff" /></>],
  ['Skin', <path d="M1 3l4-2c1 1 3 1 4 0l4 2-1.500 3L10 5.500V13H4V5.500L2.500 6z" fill="#b8191d" />],
  ['Settings', <path d="M2 12l5-5M7 7a3.500 3.500 0 0 1 4-5L9.500 4l1 1.500L13 4a3.500 3.500 0 0 1-6 3z" stroke="#b8191d" strokeWidth="1.800" fill="none" />],
];

const StatusBar = () => (
  <div className="flex h-[17px] shrink-0 items-center border-t border-[#999] bg-[#f0f0f0] text-[9px] leading-3 text-[#222]">
    <span className="ml-auto pr-1">AU : ON</span>
    <span className="border-l border-[#ddd] pr-[9px] pl-[3px]">Color Publication</span>
    <span className="border-l border-[#ddd] pl-1">1:[Book1]Sheet1!Col(Thermalexpansion)</span>
    <div className="flex h-full items-center bg-white">
      <SogouLogo className="size-5" />
      <button type="button" className="flex w-[17px] justify-center text-[11px] font-bold text-[#b8191d]">中</button>
      {imeIcons.map(([label, art]) => (
        <button key={label} type="button" aria-label={label} className="flex w-4 justify-center">
          <svg viewBox="0 0 14 14" className="size-3">{art}</svg>
        </button>
      ))}
    </div>
  </div>
);

const Watermark = () => (
  <svg viewBox="0 0 190 84" className="pointer-events-none absolute right-11 bottom-[21px] h-[84px] w-[190px] font-[Liberation_Sans,Noto_Sans_CJK_SC,sans-serif]" aria-hidden="true">
    <g fill="#fff" fillOpacity=".85" stroke="#ccc">
      <text x="1" y="53" fontSize="40" fontWeight="bold">Bai</text>
      <ellipse cx="70" cy="20" rx="6.500" ry="8" />
      <ellipse cx="82" cy="9" rx="6.500" ry="8.500" />
      <ellipse cx="98" cy="9" rx="6.500" ry="8.500" />
      <ellipse cx="108" cy="23" rx="6.500" ry="8" />
      <path d="M89 21c8 0 11 8 17 14 8 6 6 17-3 19-6 1-9-1-14-1s-8 2-14 1c-9-2-11-13-3-19 6-6 9-14 17-14z" />
      <text x="76" y="49" fontSize="21" fontWeight="bold">du</text>
      <text x="116" y="52" fontSize="30" fontWeight="bold">经验</text>
    </g>
    <text x="2" y="77" fontSize="22" fill="#fff" fillOpacity=".75">jingyan.baidu.com</text>
  </svg>
);

const apps = [
  { name: 'Start', art: <path d="M3 5l6-1v5.500H3zM10 4l7-1v6.500h-7zM3 10.500h6V16l-6-1zM10 10.500h7V17l-7-1z" fill="#fff" /> },
  { name: 'Edge', art: <path d="M2 10C3 5 6 2 11 2c5 0 8 4 7 9H8c0 4 6 5 9 3v3c-5 3-13 1-13-5 0-3 2-5 4-5-2-1-5 1-6 3zm6-1h6c0-4-5-4-6 0z" fill="#1582d8" /> },
  { name: 'Explorer', running: true, art: <><path d="M1 3h6l1 2h11v13H1z" fill="#f0c95c" /><path d="M1 6h18v12H1z" fill="#fbe29a" /><path d="M5 18v-6h10v6h-3v-3H8v3z" fill="#3fa9d8" /></> },
  { name: 'Photoshop', art: <path d="M1.500 1.500h17v17h-17z" fill="#0c1736" stroke="#7aa7e0" />, text: 'Ps' },
  {
    name: 'Browser', running: true,
    art: (
      <>
        <circle cx="10" cy="10" r="9.500" fill="#f33" />
        <path d="M10 10V.5a9.500 9.500 0 0 1 8.200 4.700z" fill="#a33ee0" />
        <path d="M10 10l8.200 4.800A9.500 9.500 0 0 1 10 19.500z" fill="#fb3" />
        <path d="M10 10v9.500a9.500 9.500 0 0 1-8.200-4.700z" fill="#cde32a" />
        <path d="M10 10l-8.200 4.800a9.500 9.500 0 0 1 0-9.600z" fill="#3bc04a" />
        <path d="M10 10L1.800 5.200A9.500 9.500 0 0 1 10 .5z" fill="#2f7fee" />
        <circle cx="10" cy="10" r="2" fill="#fff" />
      </>
    ),
  },
  { name: 'WeChat', running: true, art: <><ellipse cx="8" cy="8" rx="7.500" ry="6" fill="#6fd234" /><path d="M3 12l-1 4 4-2z" fill="#6fd234" /><ellipse cx="13.500" cy="13" rx="6" ry="5" fill="#f4f4f4" /><path d="M17 16l1 3-3-2z" fill="#f4f4f4" /><circle cx="5.500" cy="6.500" r="1" fill="#222" /><circle cx="10" cy="6.500" r="1" fill="#222" /><circle cx="11.500" cy="12" r=".8" fill="#666" /><circle cx="15.500" cy="12" r=".8" fill="#666" /></> },
  { name: 'Viewer', running: true, art: <><circle cx="10" cy="10" r="9.500" fill="#8d7e74" /><path d="M2 6c4-5 12-5 15 0-4-2-9 0-11 4z" fill="#cfc1b2" /><path d="M3 14c3-3 6 0 8-3s5-2 7 1c-2 7-12 9-15 2z" fill="#5a6f8d" /><circle cx="11" cy="8" r="3" fill="#b98f6e" /></> },
];

const Taskbar = () => (
  <footer className="flex h-[29px] shrink-0 bg-gradient-to-r from-black via-[#17110f] to-black text-white">
    {apps.map((a) => (
      <button key={a.name} type="button" aria-label={a.name} className="relative flex w-9 items-center justify-center">
        <svg viewBox="0 0 20 20" className="size-[17px]">
          {a.art}
          {a.text && <text x="10" y="14" fontSize="10" fontWeight="bold" textAnchor="middle" fill="#9cc8ff">{a.text}</text>}
        </svg>
        {a.running && <span className="absolute inset-x-1 bottom-0 h-[2px] bg-[#82b4dc]" />}
      </button>
    ))}
    <button type="button" aria-label="OriginPro" className="relative flex w-9 items-center justify-center bg-[#3d3d3d]">
      <OriginLogo className="size-[17px]" />
      <span className="absolute inset-x-0 bottom-0 h-[2px] bg-[#82b4dc]" />
    </button>
    <div className="ml-auto flex items-center">
      {[
        ['Hidden icons', <path d="M2 9l5-5 5 5" stroke="#eee" fill="none" />],
        ['Battery', <><path d="M4 4h9v6H4z" fill="#eee" /><path d="M1 3v5h3M2 1v2M5 3h2" stroke="#eee" fill="none" /></>],
        ['Network', <path d="M3.500 2.500h9v7h-9zM6 12h5M8 10v2M1 1v4h3" stroke="#eee" fill="none" />],
        ['Security', <><circle cx="7" cy="7" r="6" fill="#7fc41c" stroke="#f4dc00" strokeWidth="1.500" /><path d="M7 3.500v7M3.500 7h7" stroke="#fff" strokeWidth="2" /></>],
        ['Volume', <path d="M1 5h2l3-3v10L3 9H1zM8 5c1 1 1 3 0 4M10 3.500c2 2 2 5 0 7M12 2c2 3 2 7 0 10" stroke="#ddd" fill="none" />],
        ['Messages', <path d="M1.500 1.500h11v9h-4L7 13v-2.500H1.500zM4 4h6M4 6h6M4 8h4" stroke="#eee" fill="none" />],
      ].map(([label, art]) => (
        <button key={label} type="button" aria-label={label} className="flex w-[18px] justify-center">
          <svg viewBox="0 0 14 14" className="size-3">{art}</svg>
        </button>
      ))}
      <button type="button" className="w-4 text-center text-[10px] leading-3">中</button>
      <button type="button" aria-label="Input method" className="flex w-[26px] justify-center"><SogouLogo className="size-3" /></button>
      <div className="w-[54px] text-center text-[9px] leading-3">
        <div>16:22</div>
        <div>2018/1/3</div>
      </div>
      <span className="mr-px ml-[2px] h-full w-px bg-[#333]" />
    </div>
  </footer>
);

export default function App() {
  return (
    <div className="relative flex h-screen min-h-[420px] flex-col overflow-hidden bg-[#efefef] font-[Open_Sans,Noto_Sans_CJK_SC,sans-serif]">
      <TopBars />
      <TopToolbars />
      <main className="flex min-h-0 flex-1 border-t border-[#888] bg-[#efefef]">
        <SideTools />
        <ProjectExplorer />
        <div className="mr-[2px] flex min-w-0 flex-1 overflow-hidden bg-[#c0c0c0]">
          <div className="relative z-10 bg-white">
            <span className="absolute top-px left-0 flex size-[14px] items-center justify-center bg-[#c4c4c4] font-[Liberation_Sans,Arial,sans-serif] text-[9px] font-bold">1</span>
            <BarChart />
          </div>
        </div>
      </main>
      <BottomToolbars />
      <FindPanel />
      <StatusBar />
      <Taskbar />
      <Watermark />
    </div>
  );
}
